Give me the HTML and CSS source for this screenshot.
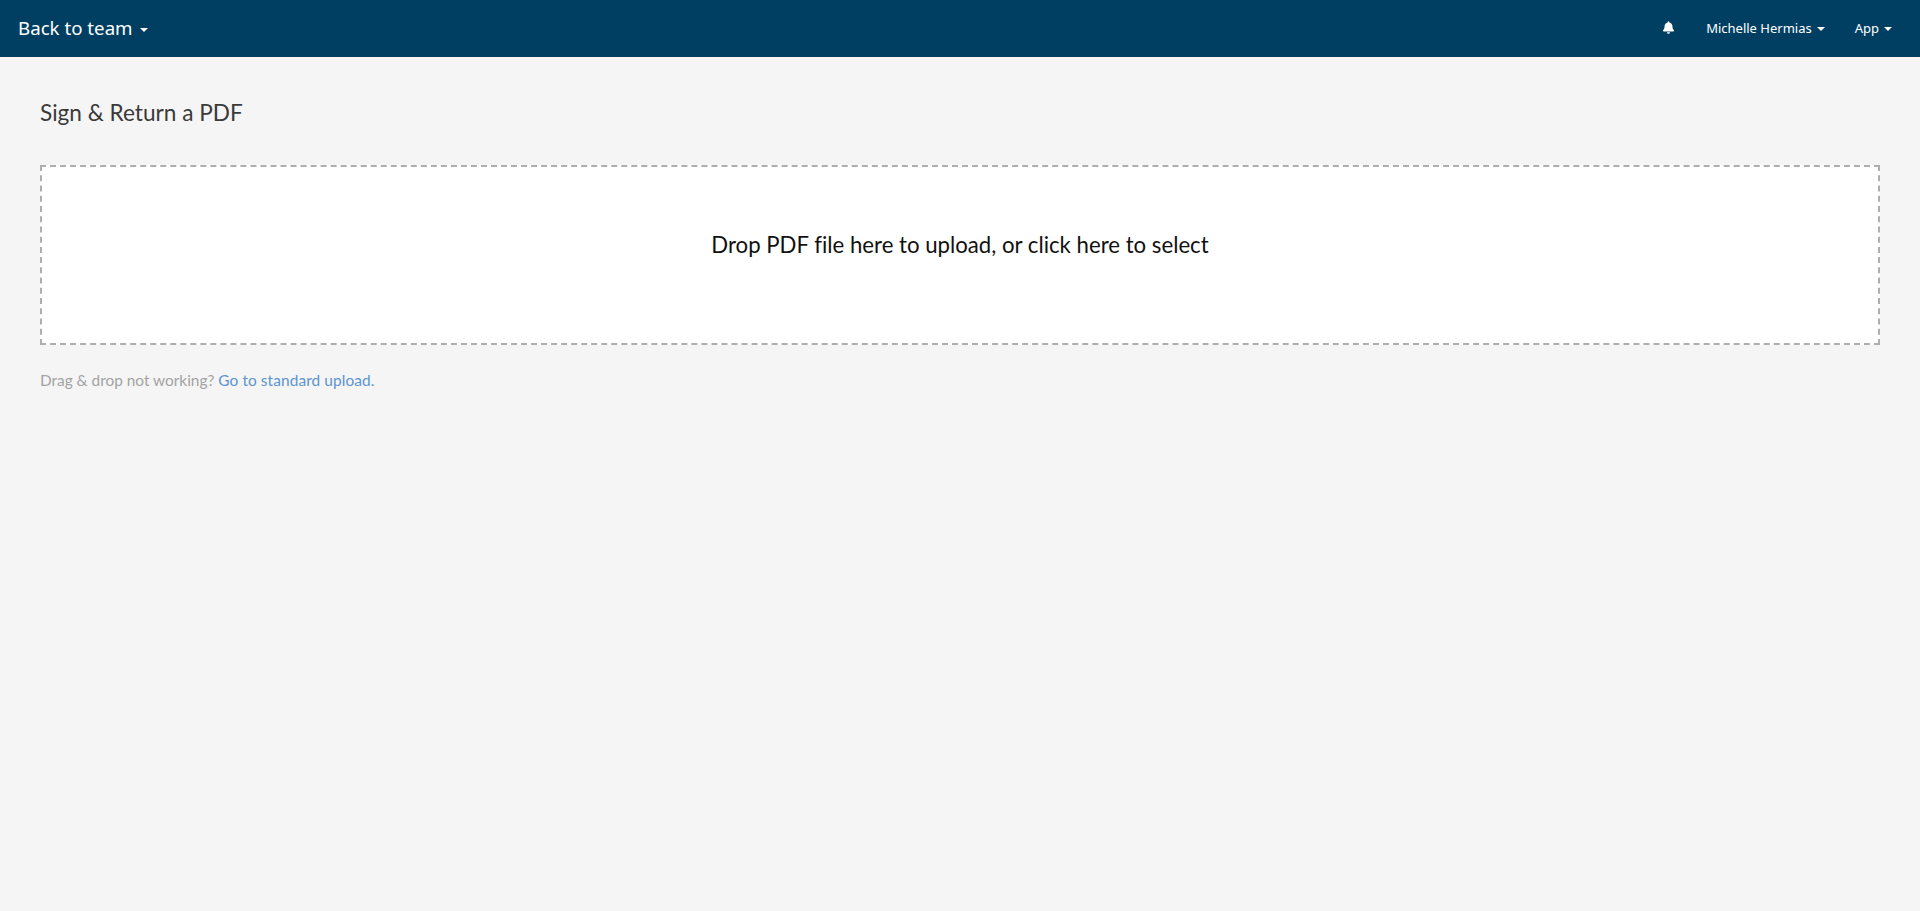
FILE: index.html
```html
<!DOCTYPE html>
<html lang="en">
<head>
<meta charset="utf-8">
<title>Sign &amp; Return a PDF</title>
<link rel="stylesheet" href="styles.css">
</head>
<body>
<header class="topbar">
  <a class="brand" href="#">Back to team<span class="caret"></span></a>
  <nav class="topnav">
    <a class="bell" href="#" aria-label="Notifications">
      <svg width="11" height="13" viewBox="0 0 448 512"><path fill="currentColor" d="M224 512c35.300 0 64-28.700 64-64H160c0 35.300 28.700 64 64 64zm215.400-149.700c-19.300-20.800-55.500-52-55.500-154.300 0-77.700-54.500-139.900-127.900-155.200V32c0-17.700-14.300-32-32-32s-32 14.300-32 32v20.800C118.600 68.100 64.100 130.300 64.100 208c0 102.300-36.200 133.500-55.500 154.300-6 6.400-8.700 14.100-8.600 21.700.1 16.400 13 32 32.100 32h383.800c19.100 0 32-15.600 32.100-32 .1-7.600-2.600-15.300-8.600-21.700z"/></svg>
    </a>
    <a class="navlink" href="#">Michelle Hermias<span class="caret small"></span></a>
    <a class="navlink" href="#">App<span class="caret small"></span></a>
  </nav>
</header>
<main class="content">
  <h1 class="title">Sign &amp; Return a PDF</h1>
  <div class="dropzone"><p class="dropmsg">Drop PDF file here to upload, or click here to select</p></div>
  <p class="help">Drag &amp; drop not working? <a href="#">Go to standard upload.</a></p>
</main>
</body>
</html>
```
FILE: styles.css
```css
* { box-sizing: border-box; }
html, body { margin: 0; height: 100%; }
body { background: #f5f5f5; font-family: "Lato", "Liberation Sans", sans-serif; font-variant-ligatures: none; color: #333; }
a { text-decoration: none; }
.topbar { height: 57px; background: #003f62; display: flex; align-items: center; justify-content: space-between; padding: 0 28px 2px 18px; color: #fff; }
.brand { color: #fff; font-family: "Noto Sans", sans-serif; font-size: 18.7px; }
.caret { display: inline-block; width: 0; height: 0; margin-left: 7px; vertical-align: middle; border-top: 4px solid #fff; border-left: 4px solid transparent; border-right: 4px solid transparent; }
.caret.small { margin-left: 5px; }
.topnav { display: flex; align-items: center; gap: 30px; }
.navlink { color: #fff; font-family: "Noto Sans", sans-serif; font-size: 13px; }
.bell { color: #fff; display: flex; margin-right: 2px; }
.content { padding: 0 40px; }
.title { margin: 42px 0 0; font-size: 22.6px; line-height: 28px; font-weight: 400; color: #3a3a3a; }
.dropzone { margin-top: 38px; height: 180px; background: #fff; border: 2px dashed #aeaeae; padding-top: 64px; text-align: center; }
.dropmsg { margin: 0; font-size: 22.2px; line-height: 28px; color: #111; }
.help { margin: 25px 0 0; font-size: 15.4px; line-height: 20px; color: #a3a3a3; }
.help a { color: #5b94d0; letter-spacing: 0.1px; }
```
